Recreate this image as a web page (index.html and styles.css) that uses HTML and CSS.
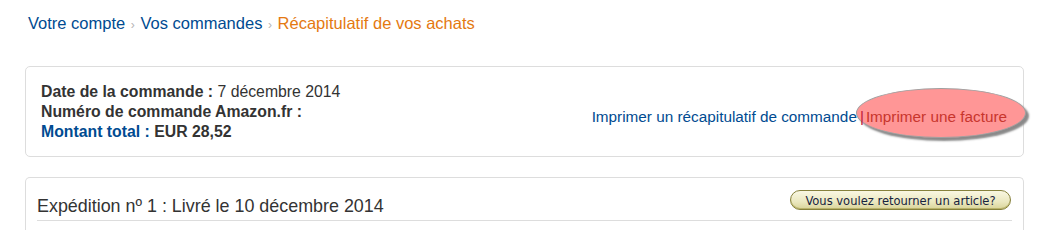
FILE: index.html
```html
<!DOCTYPE html>
<html lang="fr">
<head>
  <meta charset="UTF-8" />
  <title>Récapitulatif de vos achats</title>
  <link rel="stylesheet" href="styles.css">
</head>
<body>

  <!-- Breadcrumb -->
  <div class="breadcrumb">
    <a href="#">Votre compte</a>
    <span class="sep">›</span>
    <a href="#">Vos commandes</a>
    <span class="sep">›</span>
    <span class="current">Récapitulatif de vos achats</span>
  </div>

  <!-- Order summary -->
  <div class="box order-box">
    <div class="order-info">
      <div><b>Date de la commande :</b> 7 décembre 2014</div>
      <div><b>Numéro de commande Amazon.fr :</b></div>
      <div><b><span class="blue">Montant total :</span> EUR 28,52</b></div>
    </div>
    <div class="order-links">
      <a href="#">Imprimer un récapitulatif de commande</a><span class="pipe">|</span><a href="#" class="invoice">Imprimer une facture</a>
    </div>
    <div class="highlight"></div>
  </div>

  <!-- Shipment -->
  <div class="box ship-box">
    <div class="ship-head">
      <h3>Expédition nº 1 : Livré le 10 décembre 2014</h3>
      <button class="return-btn">Vous voulez retourner un article?</button>
    </div>
  </div>

</body>
</html>
```

FILE: styles.css
```css
* {
  box-sizing: border-box;
}

body {
  margin: 0;
  padding: 12px 22px 0 25px;
  font-family: Arial, "Liberation Sans", sans-serif;
  color: #333;
  background: #fff;
}

a {
  text-decoration: none;
  color: #004b91;
}

.breadcrumb {
  font-size: 16.5px;
  padding-left: 3px;
  height: 22px;
  line-height: 22px;
  margin-bottom: 32px;
}

.breadcrumb .sep {
  color: #b5b5b5;
  font-size: 12px;
  margin: 0 1px;
}

.breadcrumb .current {
  color: #e47911;
}

.box {
  border: 1px solid #ddd;
  border-radius: 5px;
  width: 999px;
}

.order-box {
  position: relative;
  display: flex;
  align-items: center;
  justify-content: space-between;
  padding: 17px 16px 16px 15px;
  height: 91px;
  margin-bottom: 20px;
}

.order-info {
  font-size: 15.8px;
  line-height: 20px;
}

.order-info b {
  font-weight: bold;
}

.blue {
  color: #004b91;
}

.order-links {
  position: relative;
  z-index: 1;
  font-size: 15.3px;
  padding-top: 10px;
}

.order-links .pipe {
  color: #c0203a;
  margin: 0 2px 0 3px;
}

.order-links .invoice {
  color: #c8352d;
}

.highlight {
  position: absolute;
  left: 830px;
  top: 21px;
  width: 170px;
  height: 50px;
  border-radius: 50%;
  background: #ff9696;
  border: 1px solid #a0a0a0;
  box-shadow: 3px 3px 2px #8a8a8a;
}

.ship-box {
  height: 53px;
  padding: 0 11px;
  border-bottom: none;
  border-radius: 5px 5px 0 0;
}

.ship-head {
  display: flex;
  justify-content: space-between;
  align-items: flex-start;
  border-bottom: 1px solid #ddd;
  padding-top: 12px;
  height: 43px;
}

.ship-head h3 {
  margin: 5px 0 0 0;
  font-size: 17.9px;
  font-weight: normal;
  line-height: 22px;
  color: #333;
}

.return-btn {
  margin-right: 1px;
  width: 221px;
  height: 20px;
  padding: 0;
  border: 1px solid #86813c;
  border-radius: 10px;
  background: linear-gradient(#f9f7e2, #ebe8bf 60%, #d9d49a);
  box-shadow: inset 0 -1px 0 #b9b36a;
  color: #17233f;
  font-family: "DejaVu Sans Condensed", "DejaVu Sans", sans-serif;
  font-size: 12.8px;
  line-height: 17px;
}
```
